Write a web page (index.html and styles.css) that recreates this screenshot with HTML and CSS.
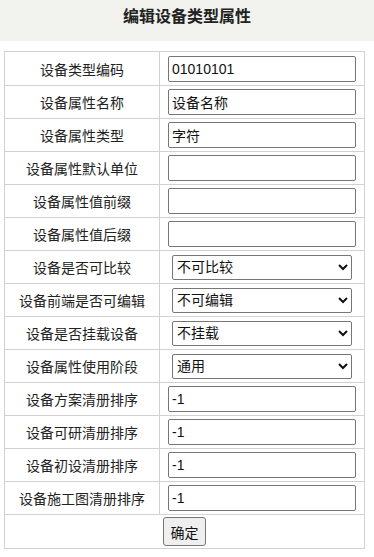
FILE: index.html
```html
<!DOCTYPE html>
<html lang="zh-CN">
<head>
    <meta charset="UTF-8">
    <meta name="viewport" content="width=device-width, initial-scale=1.0">
    <title>编辑设备类型属性</title>
    <link rel="stylesheet" href="styles.css">
</head>
<body>
    <div class="page-head">
        <h2>编辑设备类型属性</h2>
    </div>

    <form class="edit-form">
        <table class="attr-table">
            <tr class="first-row">
                <td class="label">设备类型编码</td>
                <td><input type="text" class="field" value="01010101"></td>
            </tr>
            <tr>
                <td class="label">设备属性名称</td>
                <td><input type="text" class="field" value="设备名称"></td>
            </tr>
            <tr>
                <td class="label">设备属性类型</td>
                <td><input type="text" class="field" value="字符"></td>
            </tr>
            <tr>
                <td class="label">设备属性默认单位</td>
                <td><input type="text" class="field" value=""></td>
            </tr>
            <tr>
                <td class="label">设备属性值前缀</td>
                <td><input type="text" class="field" value=""></td>
            </tr>
            <tr>
                <td class="label">设备属性值后缀</td>
                <td><input type="text" class="field" value=""></td>
            </tr>
            <tr>
                <td class="label">设备是否可比较</td>
                <td>
                    <select class="choice">
                        <option>不可比较</option>
                        <option>可比较</option>
                    </select>
                </td>
            </tr>
            <tr>
                <td class="label">设备前端是否可编辑</td>
                <td>
                    <select class="choice">
                        <option>不可编辑</option>
                        <option>可编辑</option>
                    </select>
                </td>
            </tr>
            <tr>
                <td class="label">设备是否挂载设备</td>
                <td>
                    <select class="choice">
                        <option>不挂载</option>
                        <option>挂载</option>
                    </select>
                </td>
            </tr>
            <tr>
                <td class="label">设备属性使用阶段</td>
                <td>
                    <select class="choice">
                        <option>通用</option>
                    </select>
                </td>
            </tr>
            <tr>
                <td class="label">设备方案清册排序</td>
                <td><input type="text" class="field" value="-1"></td>
            </tr>
            <tr>
                <td class="label">设备可研清册排序</td>
                <td><input type="text" class="field" value="-1"></td>
            </tr>
            <tr>
                <td class="label">设备初设清册排序</td>
                <td><input type="text" class="field" value="-1"></td>
            </tr>
            <tr>
                <td class="label">设备施工图清册排序</td>
                <td><input type="text" class="field" value="-1"></td>
            </tr>
            <tr class="submit-row">
                <td colspan="2"><button type="button" class="submit-btn">确定</button></td>
            </tr>
        </table>
    </form>
</body>
</html>
```

FILE: styles.css
```css
body {
    margin: 0;
    font-family: "Liberation Sans", "Noto Sans CJK SC", sans-serif;
    font-size: 14px;
    color: #222;
    background-color: white;
}
.page-head {
    background-color: #f2f3ee;
    height: 41px;
    text-align: center;
}
.page-head h2 {
    margin: 0;
    padding-top: 6px;
    font-size: 16px;
    line-height: 22px;
    font-weight: bold;
    color: #222;
}
.edit-form {
    margin: 10px 9px 0 4px;
}
.attr-table {
    width: 100%;
    border-collapse: collapse;
}
.attr-table td {
    border: 1px solid #d2d2d2;
    height: 32px;
    padding: 0;
    text-align: center;
}
.attr-table td.label {
    width: 154px;
}
.first-row td {
    height: 33px;
}
.field {
    box-sizing: border-box;
    width: 188px;
    height: 26px;
    margin: 0;
    padding: 1px 3px;
    font-family: "Liberation Sans", "Noto Sans CJK SC", sans-serif;
    font-size: 14px;
    color: #111;
    border: 1px solid #767676;
    border-radius: 2px;
    vertical-align: middle;
}
.choice {
    box-sizing: border-box;
    width: 180px;
    height: 25px;
    margin: 0;
    font-family: "Liberation Sans", "Noto Sans CJK SC", sans-serif;
    font-size: 14px;
    color: #111;
    border: 1px solid #767676;
    border-radius: 2px;
    background-color: white;
    vertical-align: middle;
}
.submit-row td {
    height: 33px;
}
.submit-btn {
    box-sizing: border-box;
    width: 43px;
    height: 29px;
    padding: 0;
    font-family: "Liberation Sans", "Noto Sans CJK SC", sans-serif;
    font-size: 14px;
    color: #111;
    background-color: #efefef;
    border: 1px solid #767676;
    border-radius: 3px;
    vertical-align: middle;
}
```
